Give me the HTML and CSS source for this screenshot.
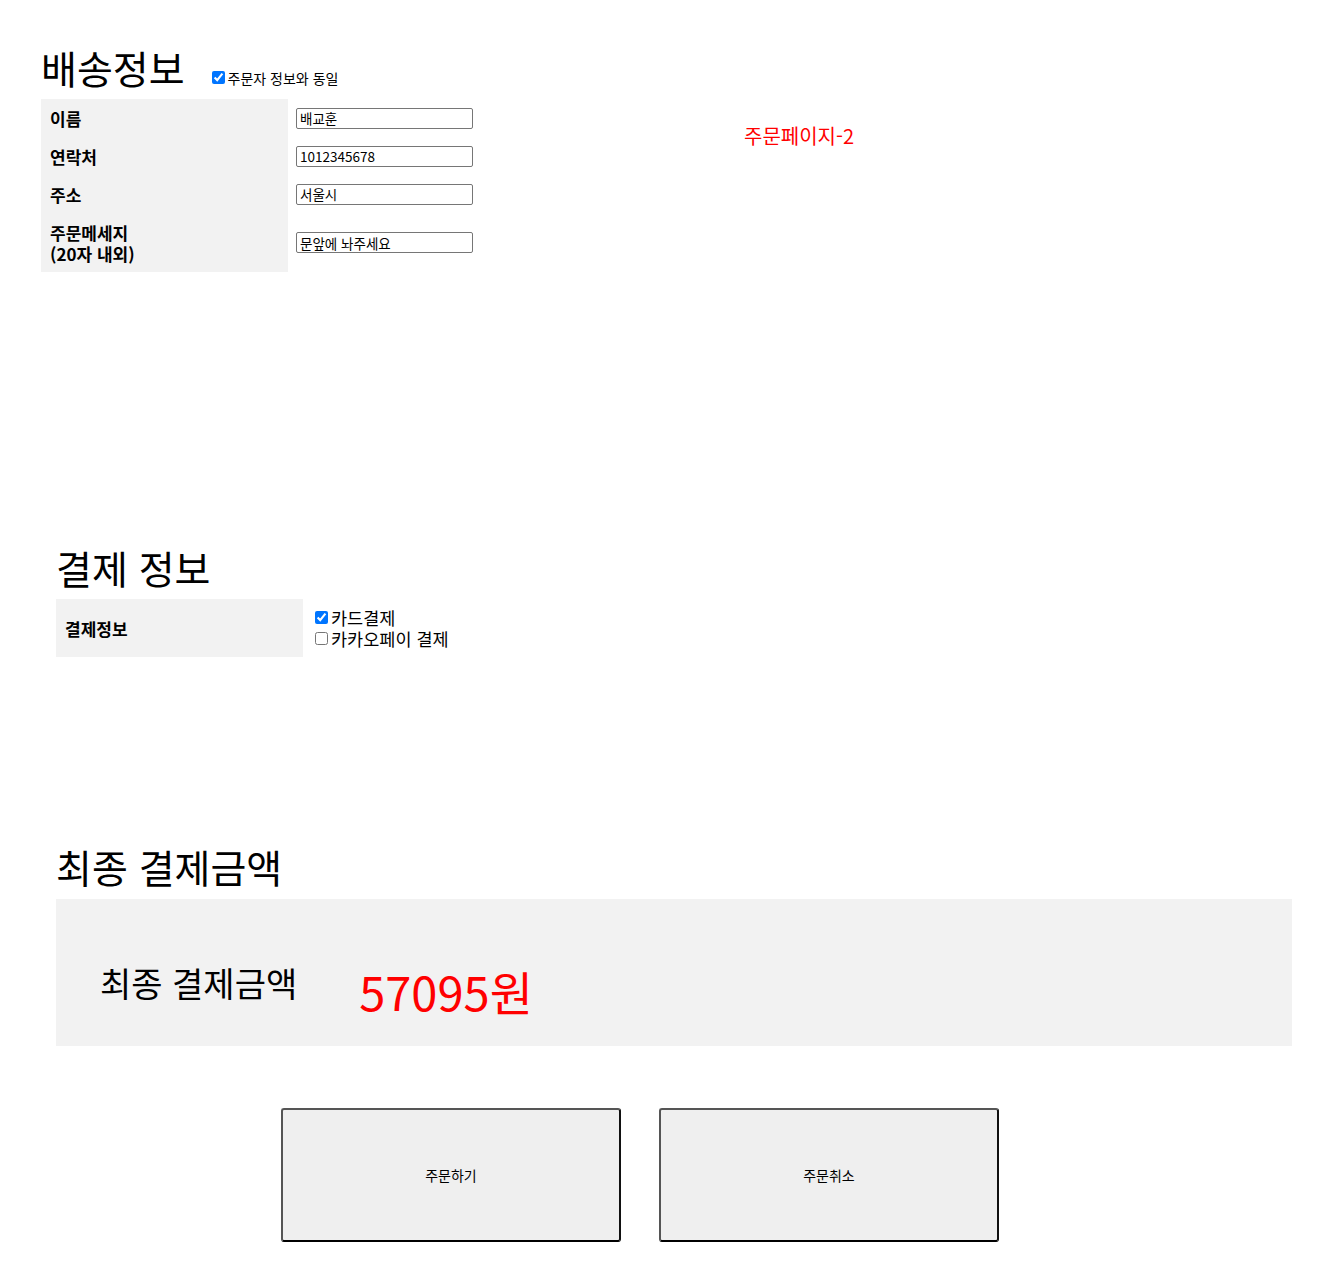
FILE: index.html
```html
<!DOCTYPE html>
<html lang="ko">
<head>
<meta charset="utf-8">
<title>주문페이지-2</title>
<link rel="stylesheet" href="styles.css">
</head>
<body>
<div class="page">
  <section class="shipping">
    <div class="ship-left">
      <div class="title-row">
        <h1 class="title">배송정보</h1>
        <label class="same"><input type="checkbox" checked>주문자 정보와 동일</label>
      </div>
      <table class="info">
        <tr>
          <th>이름</th>
          <td><input class="field" type="text" value="배교훈"></td>
        </tr>
        <tr>
          <th>연락처</th>
          <td><input class="field" type="text" value="1012345678"></td>
        </tr>
        <tr>
          <th>주소</th>
          <td><input class="field" type="text" value="서울시"></td>
        </tr>
        <tr>
          <th>주문메세지<br>(20자 내외)</th>
          <td><input class="field" type="text" value="문앞에 놔주세요"></td>
        </tr>
      </table>
    </div>
    <p class="page-tag">주문페이지-2</p>
  </section>

  <section class="payment">
    <h1 class="title">결제 정보</h1>
    <table class="info pay">
      <tr>
        <th>결제정보</th>
        <td>
          <label class="opt"><input type="checkbox" checked>카드결제</label>
          <label class="opt"><input type="checkbox">카카오페이 결제</label>
        </td>
      </tr>
    </table>
  </section>

  <section class="final">
    <h1 class="title">최종 결제금액</h1>
    <div class="final-box">
      <span class="final-label">최종 결제금액</span>
      <span class="final-amount">57095원</span>
    </div>
  </section>

  <div class="actions">
    <button class="btn" type="button">주문하기</button>
    <button class="btn" type="button">주문취소</button>
  </div>
</div>
</body>
</html>
```

FILE: styles.css
```css
html, body {
  margin: 0;
  padding: 0;
  background: #ffffff;
}

body {
  font-family: "Noto Sans CJK KR", "Noto Sans", sans-serif;
  color: #000;
}

.page {
  width: 1332px;
}

.title {
  margin: 0;
  font-size: 39px;
  line-height: 44px;
  font-weight: 400;
}

/* shipping */
.shipping {
  display: flex;
  align-items: flex-start;
  padding: 45px 0 0 41px;
}

.title-row {
  display: flex;
  align-items: baseline;
}

.same {
  margin-left: 23px;
  font-size: 14px;
  line-height: 20px;
}

.same input,
.opt input {
  width: 13px;
  height: 13px;
  margin: 0 3px 0 4px;
  accent-color: #0075ff;
}

.info {
  border-collapse: collapse;
  border-spacing: 0;
  margin-top: 10px;
}

.info th {
  width: 229px;
  padding: 8.5px 9px;
  background: #f2f2f2;
  text-align: left;
  font-size: 17px;
  line-height: 21px;
  font-weight: 700;
  vertical-align: middle;
}

.info td {
  padding: 8.5px 8px;
  vertical-align: middle;
}

.field {
  display: block;
  box-sizing: border-box;
  width: 177px;
  height: 21px;
  margin: 0;
  padding: 0 3px;
  border: 1px solid #767676;
  border-radius: 2px;
  font-family: "Noto Sans CJK KR", "Noto Sans", sans-serif;
  font-size: 13.5px;
  line-height: 19px;
  color: #000;
  background: #fff;
}

.page-tag {
  margin: 81px 0 0 263px;
  font-size: 20px;
  line-height: 20px;
  color: #ff0000;
}

/* payment */
.payment {
  margin-top: 273px;
  padding-left: 56px;
}

.pay th {
  padding: 8px 9px;
}

.pay td {
  padding: 8px 8px;
}

.opt {
  display: flex;
  align-items: center;
  font-size: 17.5px;
  line-height: 21px;
}

/* final */
.final {
  margin-top: 187px;
  padding-left: 56px;
}

.final-box {
  box-sizing: border-box;
  display: flex;
  align-items: flex-start;
  width: 1236px;
  height: 147px;
  margin-top: 11px;
  padding: 64px 0 0 44px;
  background: #f2f2f2;
}

.final-label {
  font-size: 34px;
  line-height: 40px;
}

.final-amount {
  margin-left: 62px;
  font-size: 47px;
  line-height: 56px;
  color: #ff0000;
}

/* actions */
.actions {
  display: flex;
  gap: 38px;
  margin-top: 62px;
  padding-left: 281px;
}

.btn {
  box-sizing: border-box;
  width: 340px;
  height: 134px;
  margin: 0;
  padding: 0;
  border: 2px solid;
  border-color: #555555 #111111 #000000 #555555;
  border-radius: 3px;
  background: #efefef;
  font-family: "Noto Sans CJK KR", "Noto Sans", sans-serif;
  font-size: 14px;
  color: #000;
}
```
